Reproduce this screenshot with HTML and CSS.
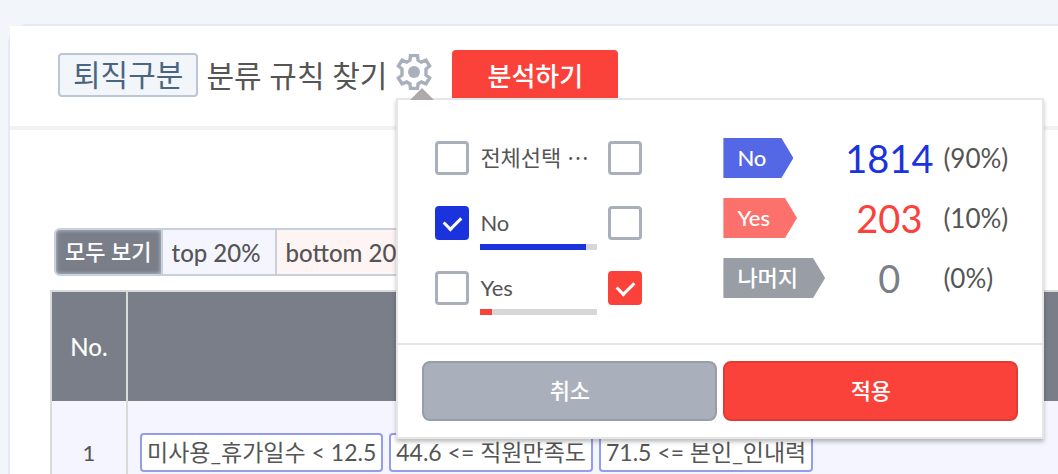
FILE: index.html
```
<!DOCTYPE html>
<html lang="ko">
<head>
  <meta charset="UTF-8">
  <meta name="viewport" content="width=device-width, initial-scale=1">
  <title>퇴직구분 분류 규칙 찾기</title>
  <link rel="stylesheet" href="styles.css">
</head>
<body>

  <main class="panel">
    <!-- 제목 영역 -->
    <header class="panel-header">
      <h1><span class="target">퇴직구분</span> 분류 규칙 찾기</h1>

      <div class="settings">
        <button type="button" class="gear-btn" aria-label="설정">
          <svg width="36" height="36" viewBox="0 0 36 36">
            <path d="M14.5 1.5h7l.6 4.6 3.2 1.9 4.6-1.8 3.7 5.8-3.6 3v6l3.6 3-3.7 5.8-4.6-1.8-3.2 1.9-.6 4.6h-7l-.6-4.6-3.2-1.9-4.6 1.8-3.7-5.8 3.6-3v-6l-3.6-3 3.7-5.8 4.6 1.8 3.2-1.9z" fill="none" stroke="#a9afbb" stroke-width="3.4"/>
            <circle cx="18" cy="18" r="6" fill="#a9afbb"/>
          </svg>
        </button>

        <!-- 설정 팝업 -->
        <form class="popup">
          <div class="popup-body">
            <div class="choices">
              <input type="checkbox" id="allNo" class="check">
              <label for="allNo" class="choice">전체선택 ⋯</label>
              <input type="checkbox" id="allYes" class="check" aria-label="전체선택">

              <input type="checkbox" id="noLeft" class="check blue" checked>
              <label for="noLeft" class="choice">No
                <span class="bar"><span class="bar-fill blue" style="width: 90%"></span></span>
              </label>
              <input type="checkbox" id="noRight" class="check red" aria-label="No">

              <input type="checkbox" id="yesLeft" class="check blue">
              <label for="yesLeft" class="choice">Yes
                <span class="bar"><span class="bar-fill red" style="width: 10%"></span></span>
              </label>
              <input type="checkbox" id="yesRight" class="check red" aria-label="Yes" checked>
            </div>

            <div class="summary">
              <span class="tag tag-no">No</span>
              <strong class="count count-no">1814</strong>
              <span class="percent">(90%)</span>

              <span class="tag tag-yes">Yes</span>
              <strong class="count count-yes">203</strong>
              <span class="percent">(10%)</span>

              <span class="tag tag-rest">나머지</span>
              <strong class="count count-rest">0</strong>
              <span class="percent">(0%)</span>
            </div>
          </div>
          <div class="popup-footer">
            <button type="button" class="cancel-btn">취소</button>
            <button type="submit" class="apply-btn">적용</button>
          </div>
        </form>
      </div>

      <button type="button" class="analyze-btn">분석하기</button>
    </header>

    <!-- 규칙 목록 -->
    <section class="content">
      <div class="filters">
        <button type="button" class="filter active">모두 보기</button>
        <button type="button" class="filter top">top 20%</button>
        <button type="button" class="filter bottom">bottom 20%</button>
      </div>

      <table class="rules">
        <thead>
          <tr>
            <th class="col-no">No.</th>
            <th></th>
          </tr>
        </thead>
        <tbody>
          <tr>
            <td class="col-no">1</td>
            <td>
              <div class="conditions">
                <span class="condition">미사용_휴가일수 &lt; 12.5</span>
                <span class="condition">44.6 &lt;= 직원만족도</span>
                <span class="condition">71.5 &lt;= 본인_인내력</span>
              </div>
            </td>
          </tr>
        </tbody>
      </table>
    </section>
  </main>

</body>
</html>
```
FILE: styles.css
```
* {
  box-sizing: border-box;
}

body {
  margin: 0;
  padding: 24px 0 0 8px;
  font-family: Lato, "Noto Sans CJK KR", sans-serif;
  font-size: 22px;
  color: #555;
  background: #f2f5f9;
}

button {
  padding: 0;
  border: none;
  font: inherit;
  cursor: pointer;
}

.panel {
  border: 2px solid #e6e8f8;
  border-right: none;
  border-bottom: none;
  border-radius: 20px 0 0 0;
  background: #fff;
}

/* 제목 영역 */
.panel-header {
  display: flex;
  align-items: center;
  height: 104px;
  padding-left: 48px;
  border-bottom: 4px solid #f1f1f1;
  background: #fff;
}

h1 {
  display: flex;
  align-items: center;
  gap: 8px;
  margin: 0 9px 2px 0;
  font-size: 30px;
  font-weight: 400;
  line-height: 38px;
  white-space: nowrap;
}

.target {
  padding: 0 13px 2px;
  border: 2px solid #bcc6d6;
  border-radius: 4px;
  color: #4a6580;
  background: #f2f5f9;
}

.settings {
  position: relative;
  height: 44px;
}

.gear-btn {
  display: block;
  height: 36px;
  background: none;
}

.gear-btn svg {
  display: block;
}

.analyze-btn {
  width: 166px;
  height: 52px;
  margin-left: 20px;
  padding-bottom: 4px;
  border-radius: 4px;
  font-size: 26px;
  font-weight: 500;
  color: #fff;
  background: #fb423a;
}

/* 설정 팝업 */
.popup {
  position: absolute;
  top: 44px;
  left: 0;
  z-index: 10;
  width: 648px;
  border: 2px solid #e6e6e6;
  background: #fff;
  box-shadow: 0 3px 4px rgba(0, 0, 0, 0.25);
}

.popup::before {
  content: "";
  position: absolute;
  top: -12px;
  left: 12px;
  border: 12px solid transparent;
  border-top: none;
  border-bottom-color: #aeaaaa;
}

.popup-body {
  display: flex;
  justify-content: space-between;
  height: 243px;
  padding: 38px 24px 0 37px;
}

.choices {
  display: grid;
  grid-template-columns: 34px 117px 34px;
  grid-auto-rows: 36px;
  gap: 29px 11px;
}

.check {
  display: grid;
  place-items: center;
  width: 34px;
  height: 34px;
  margin: 3px 0 0;
  border: 3px solid #a9afbb;
  border-radius: 4px;
  appearance: none;
  background: #fff;
}

.check:checked::after {
  content: "";
  width: 8px;
  height: 14px;
  margin-bottom: 4px;
  border: solid #fff;
  border-width: 0 3px 3px 0;
  transform: rotate(45deg);
}

.check.blue:checked {
  border-color: #1a33dc;
  background: #1a33dc;
}

.check.red:checked {
  border-color: #fb423a;
  background: #fb423a;
}

.choice {
  line-height: 40px;
  white-space: nowrap;
}

.bar {
  display: block;
  height: 6px;
  margin-top: 1px;
  background: #d7d7d7;
}

.bar-fill {
  display: block;
  height: 6px;
}

.bar-fill.blue {
  background: #1a33dc;
}

.bar-fill.red {
  background: #fb423a;
}

.summary {
  display: grid;
  grid-template-columns: 112px 108px 75px;
  grid-auto-rows: 40px;
  gap: 20px 0;
  line-height: 40px;
}

.tag {
  justify-self: start;
  padding: 0 27px 0 14px;
  font-weight: 500;
  color: #fff;
  clip-path: polygon(0 0, calc(100% - 12px) 0, 100% 50%, calc(100% - 12px) 100%, 0 100%);
}

.tag-no {
  background: #5468e5;
}

.tag-yes {
  background: #fc716b;
}

.tag-rest {
  background: #989da6;
}

.count {
  font-size: 38px;
  font-weight: 400;
  text-align: center;
}

.count-no {
  color: #1a33dc;
}

.count-yes {
  color: #fb423a;
}

.count-rest {
  color: #797e88;
}

.percent {
  font-size: 26px;
}

.popup-footer {
  display: flex;
  gap: 6px;
  padding: 16px 24px;
  border-top: 2px solid #e6e6e6;
}

.popup-footer button {
  flex: 1;
  height: 60px;
  padding-bottom: 4px;
  border-radius: 8px;
  font-weight: 500;
  color: #fff;
}

.popup-footer .cancel-btn {
  border: 2px solid #989daa;
  background: #a9afbb;
}

.popup-footer .apply-btn {
  border: 2px solid #e23b34;
  background: #fb423a;
}

/* 규칙 목록 */
.content {
  padding: 98px 0 0 40px;
}

.filters {
  display: flex;
  width: fit-content;
  height: 48px;
  margin-left: 4px;
  border: 2px solid #c8d0dc;
  border-radius: 6px;
  overflow: hidden;
}

.filter {
  padding: 0 14px 0 9px;
  border-right: 2px solid #c8d0dc;
  font-weight: 500;
  font-size: 24px;
  color: #555;
}

.filter:last-child {
  border-right: none;
}

.filter.active {
  padding: 0 9px 4px;
  font-size: 22px;
  color: #fff;
  background: #797e88;
  box-shadow: inset 0 0 4px #c8d0dc;
}

.filter.top {
  background: #f4f5fe;
}

.filter.bottom {
  background: #fef4f4;
}

/* 규칙 표 */
.rules {
  width: 100%;
  margin-top: 14px;
  border-collapse: collapse;
  border: 2px solid #d9dbdb;
  border-right: none;
  border-bottom: none;
}

.rules th {
  height: 110px;
  font-size: 24px;
  font-weight: 500;
  color: #fff;
  background: #797e88;
}

.rules td {
  padding: 32px 12px 2px;
  background: #f4f5fe;
}

.rules .col-no {
  width: 76px;
  padding-left: 0;
  padding-right: 0;
  border-right: 2px solid #d9dbdb;
  text-align: center;
}

.conditions {
  display: flex;
  gap: 6px;
}

.condition {
  padding: 0 5px;
  border: 2px solid #929eed;
  border-radius: 4px;
  font-size: 23px;
  line-height: 35px;
  white-space: nowrap;
  background: #fff;
}
```
